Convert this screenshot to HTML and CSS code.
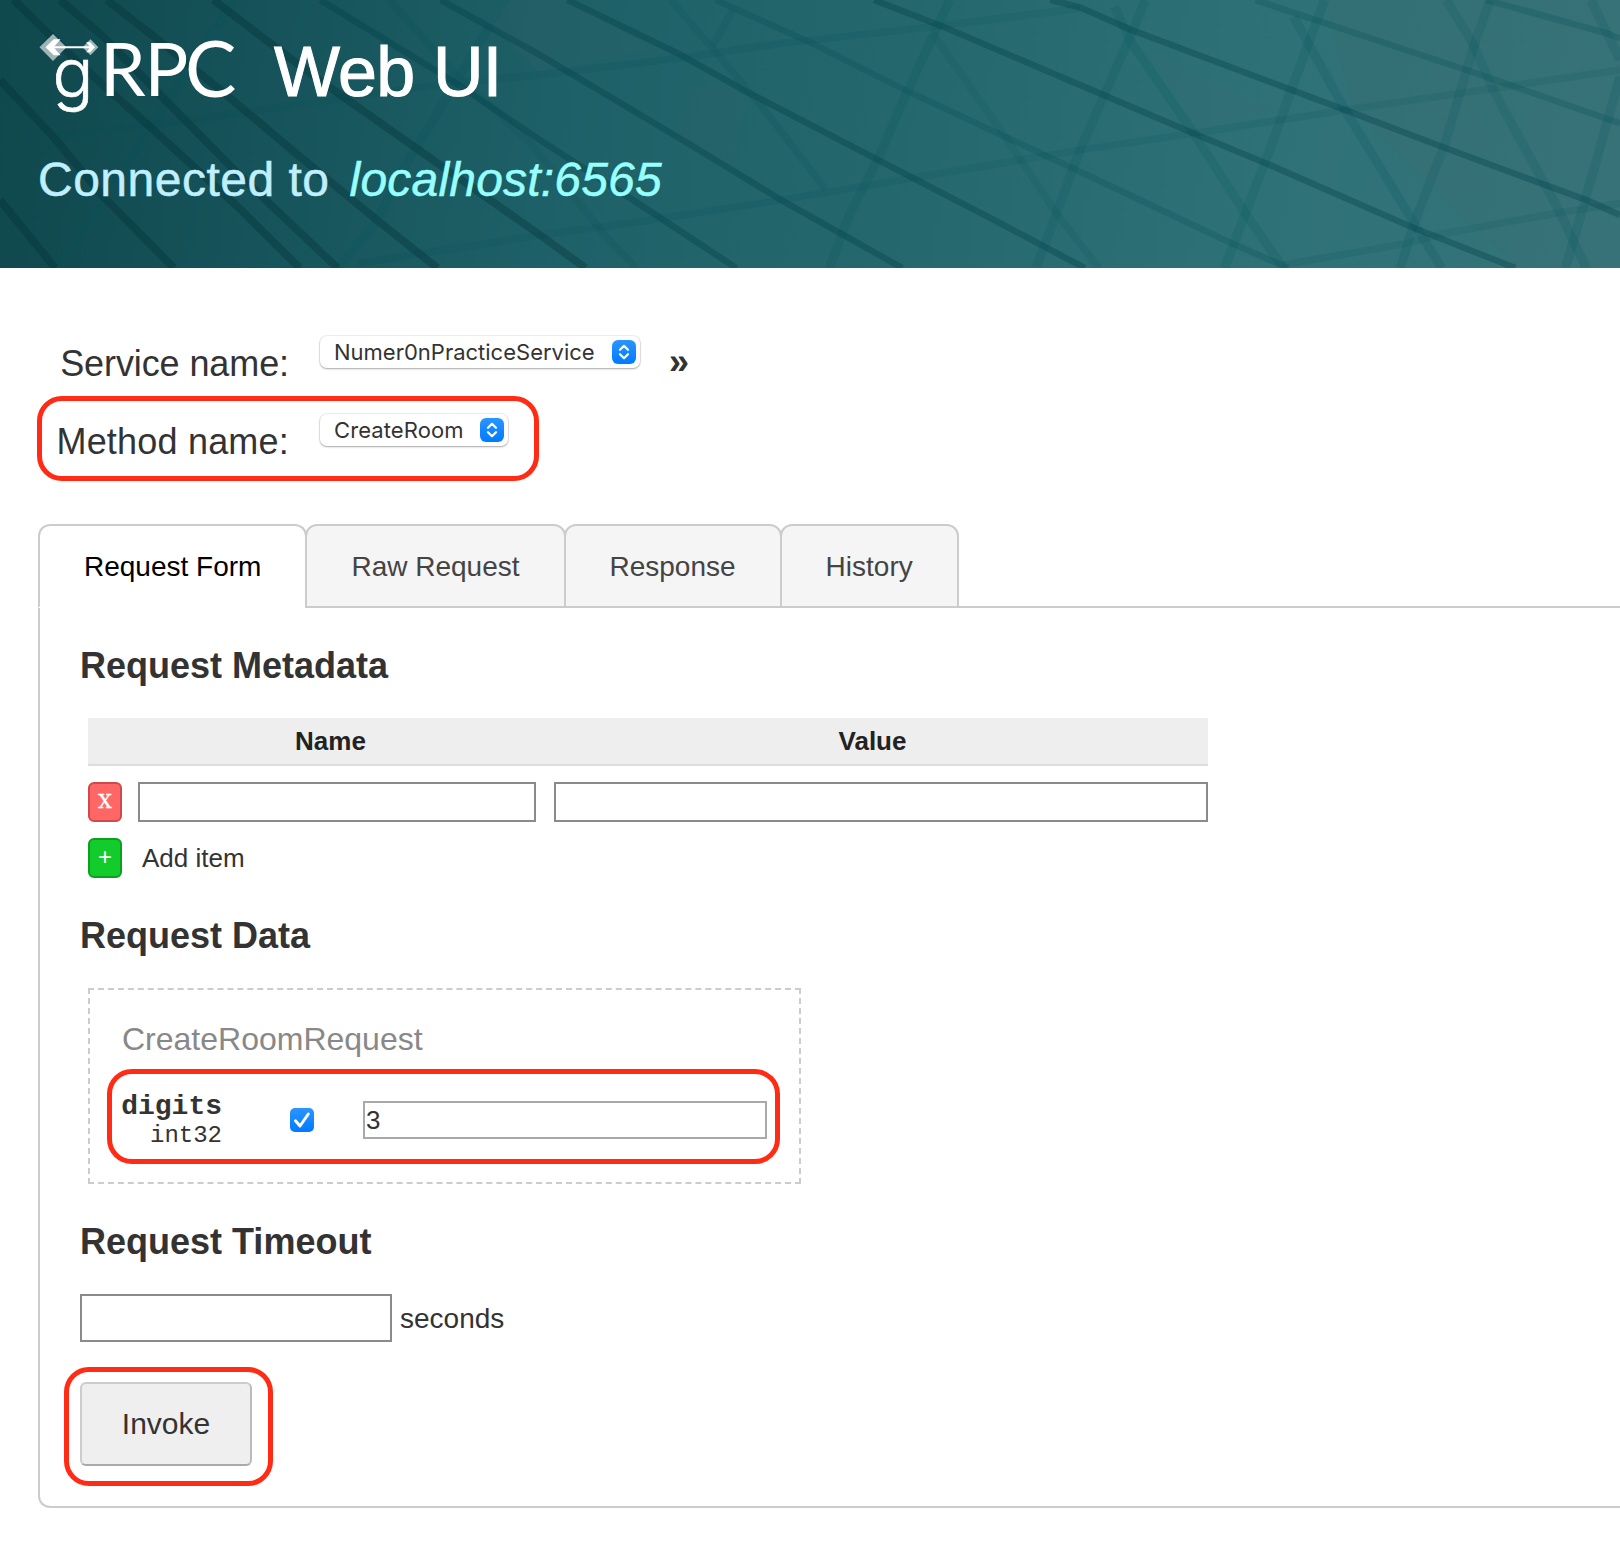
FILE: index.html
```html
<!DOCTYPE html>
<html lang="en">
<head>
<meta charset="utf-8">
<title>gRPC Web UI</title>
<link rel="stylesheet" href="styles.css">
</head>
<body>
<header class="banner">
  <svg class="banner-art" viewBox="0 0 4704 804" preserveAspectRatio="none" aria-hidden="true">
    <g class="facets">
      <path d="M1480 0H1660L1900 150L1568 215L1430 80Z"/>
      <path d="M2010 270L2100 250L2150 290L2130 500L1970 420Z"/>
      <path d="M3330 150L3700 330L3480 400Z"/>
      <path d="M3850 0H4704V800H4400L3930 330Z"/>
    </g>
    <g class="faint">
      <path d="M150 410L550 360L1300 250L1568 225L1968 175L2268 130L2668 85L3136 25"/>
      <path d="M1040 790L1568 705L1860 665L2268 600L2618 540L3136 450L3466 400L3906 330L4336 265L4704 210"/>
      <path d="M3726 795L4086 730L4196 700L4516 640L4704 610"/>
      <path d="M1130 0L1320 220L1540 430L1768 720L1848 804"/>
      <path d="M1948 0L2098 180L2228 340L2398 570"/>
      <path d="M2708 100L2918 410L3068 640L3190 804"/>
      <path d="M2128 30L2068 140"/>
    </g>
    <g class="cross">
      <path d="M680 0L560 190L430 390L300 600L165 804"/>
      <path d="M1420 80L1310 270L1180 490L1090 670L980 804"/>
      <path d="M2758 0L2708 110L2628 290L2548 480L2468 640L2408 804"/>
      <path d="M3326 0L3286 100L3136 450L3068 640L3008 804"/>
      <path d="M3846 0L3806 110L3676 480L3616 640L3556 804"/>
      <path d="M4326 0L4276 150L4196 430L4106 670L4066 804"/>
      <path d="M4704 230L4600 610L4546 804"/>
      <path d="M3236 20L3286 130L3466 400L3616 640L3726 804"/>
      <path d="M3756 50L3906 330L4106 670L4186 804"/>
      <path d="M4200 0L4276 130L4336 270L4526 630L4606 804"/>
      <path d="M4620 0L4704 180"/>
    </g>
    <g class="ribs">
      <path class="deep" d="M0 600L160 804"/>
      <path class="deep" d="M0 240L150 405L300 590L505 804"/>
      <path class="deep" d="M40 0L240 200L435 380L690 620L870 804"/>
      <path class="deep" d="M175 0L300 110L480 300L690 520L980 804"/>
      <path class="deep" d="M310 0L460 120L640 270L865 465L1100 665L1270 804"/>
      <path class="deep" d="M620 0L900 220L1230 460L1568 705L1700 804"/>
      <path d="M930 0L1310 240L1568 420L1838 600L2138 804"/>
      <path d="M1280 0L1420 80L1568 165L1998 430L2268 600L2620 804"/>
      <path d="M1648 0L1968 160L2168 275L2568 490L2868 650L3150 804"/>
      <path class="soft" d="M2078 0L2348 125L2628 270L2918 410L3136 515L3566 725L3740 804"/>
      <path d="M2538 0L2738 80L3136 255L3466 400L3676 490L4096 680L4400 804"/>
      <path d="M3050 0L3136 22L3286 90L3906 330L4186 440L4606 600L4704 645"/>
      <path class="soft" d="M3646 0L3776 45L4286 220L4704 370"/>
      <path class="soft" d="M4316 0L4666 100L4704 115"/>
    </g>
  </svg>
  <h1 class="brand">
    <svg class="logo" width="202" height="90" viewBox="38 30 202 90" role="img">
      <path class="gem" d="M39.5 47.3L53 34L66.500 47.300L53 61Z M82.500 47.300L90.500 39.300L98.300 47.300L90.500 55.300Z"/>
      <path class="tip" d="M45.500 47.300L53.800 39.300H60.500L54.500 46.300H89.500L86.200 42.300H90.200L95 47.300L90.200 52.300H86.200L89.500 48.300H54.500L60.500 55.300H53.800Z"/>
      <text class="logo-text" y="96"><tspan class="logo-g" x="52.500" y="97">g</tspan><tspan x="100 144.500" y="96">RP</tspan><tspan class="logo-c" x="185" y="97">C</tspan></text>
    </svg>
    <span class="brand-text">Web UI</span>
  </h1>
  <p class="target"><span class="target-label">Connected to</span><em>localhost:6565</em></p>
</header>

<main>
  <div class="picker">
    <label class="picker-label">Service name:</label>
    <div class="select"><span class="service">Numer0nPracticeService</span>
      <svg class="knob" viewBox="0 0 24 24"><path d="M8 9.800L12 5.800L16 9.800M8 14.200L12 18.200L16 14.200"/></svg>
    </div>
    <span class="more">»</span>
  </div>
  <div class="picker">
    <label class="picker-label wide">Method name:</label>
    <div class="select"><span class="method">CreateRoom</span>
      <svg class="knob" viewBox="0 0 24 24"><path d="M8 9.800L12 5.800L16 9.800M8 14.200L12 18.200L16 14.200"/></svg>
    </div>
    <i class="mark mark-method"></i>
  </div>

  <nav class="tabs">
    <a class="tab active">Request Form</a>
    <a class="tab">Raw Request</a>
    <a class="tab">Response</a>
    <a class="tab">History</a>
  </nav>

  <section class="panel">
    <h2>Request Metadata</h2>
    <div class="metadata">
      <div class="meta-head"><span></span><span>Name</span><span>Value</span></div>
      <div class="meta-row">
        <button class="chip remove">X</button>
        <input class="field name-field" type="text">
        <input class="field value-field" type="text">
      </div>
      <div class="meta-row">
        <button class="chip add">+</button>
        <span class="add-label">Add item</span>
      </div>
    </div>

    <h2>Request Data</h2>
    <div class="message">
      <h3>CreateRoomRequest</h3>
      <div class="param">
        <div class="param-name"><strong>digits</strong><span>int32</span></div>
        <svg class="check" viewBox="0 0 24 24"><path d="M5.500 12.800L10 18L18.300 6"/></svg>
        <input class="field param-field" type="text" value="3">
        <i class="mark mark-param"></i>
      </div>
    </div>

    <h2>Request Timeout</h2>
    <div class="timeout"><input class="field timeout-field" type="text"><span>seconds</span></div>
    <div class="actions">
      <button class="invoke">Invoke</button>
      <i class="mark mark-invoke"></i>
    </div>
  </section>
</main>
</body>
</html>
```
FILE: styles.css
```css
* { box-sizing: border-box; }

body {
  margin: 0;
  height: 1556px;
  overflow: hidden;
  background: #fff;
  color: #333;
  font-family: "Liberation Sans", Arial, sans-serif;
}

/* Banner */
.banner {
  position: relative;
  height: 268px;
  padding: 30px 38px 0;
  overflow: hidden;
  background: linear-gradient(97deg, #0f484d 0%, #16535a 17%, #1e6067 34%, #24686d 55%, #2d7176 75%, #35747a 100%);
}
.banner-art { position: absolute; inset: 0; width: 100%; height: 100%; }
.banner-art path { fill: none; stroke-linejoin: round; }
.facets path { fill: rgba(80, 100, 110, .10); }
.faint path { stroke: rgba(0, 75, 82, .13); stroke-width: 22; }
.cross path { stroke: rgba(0, 82, 88, .17); stroke-width: 27; }
.ribs path { stroke: rgba(0, 62, 70, .34); stroke-width: 19; }
.ribs .deep { stroke: rgba(0, 46, 52, .33); stroke-width: 23; }
.ribs .soft { stroke: rgba(0, 75, 82, .24); }

.brand { position: relative; display: flex; margin: 0; height: 90px; font-weight: 400; }
.logo { flex: none; overflow: visible; }
.gem { fill: rgba(255, 255, 255, .6); }
.tip { fill: #fff; }
.logo-text { font: 400 73px Lato, sans-serif; fill: #fff; }
.logo-g { font: 300 68px Inter, sans-serif; stroke: #fff; stroke-width: .6px; }
.logo-c { font-size: 77px; }
.brand-text {
  margin-left: 34px;
  font-size: 70px;
  line-height: 84px;
  letter-spacing: -.8px;
  color: #fff;
  -webkit-text-stroke: 1px #fff;
}
.target {
  position: relative;
  display: flex;
  gap: 20px;
  margin: 33px 0 0;
  font-size: 48px;
  line-height: 54px;
  color: #c0efff;
}
.target-label { letter-spacing: .5px; -webkit-text-stroke: .5px; }
.target em { letter-spacing: .2px; color: #98ffff; -webkit-text-stroke: .5px; }

main { padding: 56px 0 0 38px; }

/* Service and method pickers */
.picker { position: relative; display: flex; align-items: flex-start; height: 78px; padding-top: 12px; }
.picker-label {
  width: 251px;
  margin: 8px 31px 0 0;
  text-align: right;
  font-size: 36px;
  line-height: 40px;
  letter-spacing: -.1px;
}
.picker-label.wide { letter-spacing: .2px; }
.select {
  display: flex;
  align-items: center;
  gap: 18px;
  height: 32px;
  padding: 0 4px 0 14px;
  border-radius: 7px;
  background: #fff;
  box-shadow: 0 0 0 1px rgba(0, 0, 0, .06), 0 1px 2px rgba(0, 0, 0, .3);
  font: 22px/32px Inter, sans-serif;
  white-space: nowrap;
}
.service { width: 260px; letter-spacing: 0; }
.method { width: 128px; letter-spacing: .1px; }
.knob { width: 24px; height: 24px; border-radius: 6px; background: linear-gradient(#2b95ff, #007aff); }
.knob path { fill: none; stroke: #fff; stroke-width: 2.2; stroke-linecap: round; stroke-linejoin: round; }
.more { margin: 6px 0 0 29px; font-size: 36px; line-height: 40px; font-weight: 700; }

/* Highlight frames */
.mark { position: absolute; border: 5.500px solid #ff2b14; border-radius: 25px; pointer-events: none; }
.mark-method { left: -1.500px; top: -6px; width: 502px; height: 85px; }
.mark-param { left: -14px; top: -21px; width: 673px; height: 95px; }
.mark-invoke { left: -16px; top: -15px; width: 209px; height: 119px; }

/* Tabs */
.tabs { position: relative; z-index: 1; display: flex; margin-top: 44px; }
.tab {
  height: 84px;
  padding: 1px 44px 0;
  border: 2px solid #ccc;
  border-radius: 12px 12px 0 0;
  background: #f5f5f5;
  color: #444;
  font-size: 28px;
  line-height: 80px;
}
.tab + .tab { margin-left: -2px; }
.tab.active { border-bottom-color: #fff; background: #fff; color: #000; }

.panel {
  height: 902px;
  margin-top: -2px;
  padding: 38px 0 40px 40px;
  border: 2px solid #ccc;
  border-right: 0;
  border-radius: 0 0 0 12px;
}
h2 { margin: 0 0 32px; font-size: 36px; line-height: 40px; }
.field { height: 40px; margin: 0; padding: 0 2px; border: 2px solid #8a8a8a; border-radius: 0; background: #fff; font: 26px "Liberation Sans", Arial, sans-serif; color: #333; }

/* Metadata table */
.metadata { display: grid; gap: 16px; width: 1120px; margin: 0 0 38px 8px; font-size: 26px; }
.meta-head {
  display: grid;
  grid-template-columns: 36px 413px 671px;
  height: 48px;
  border-bottom: 2px solid #ddd;
  background: #eee;
  color: #222;
  font-weight: 700;
  line-height: 46px;
  text-align: center;
}
.meta-row { display: flex; height: 40px; }
.chip { width: 34px; height: 40px; padding: 0 0 2px; border: 2px solid; border-radius: 6px; color: #fff; font: 19px/1 "DejaVu Serif", serif; }
.remove { border-color: #cc4a4a; background: #ff6666; -webkit-text-stroke: .4px #fff; }
.add { padding: 1px 0 0; border-color: #0c9f20; background: #11cc2b; font: 24px/1 "Liberation Mono", monospace; }
.name-field { width: 398px; margin-left: 16px; }
.value-field { width: 654px; margin-left: 18px; }
.add-label { margin-left: 20px; line-height: 40px; }

/* Message form */
.message { height: 196px; width: 713px; margin: 0 0 38px 8px; padding: 31px; border: 2px dashed #ccc; }
h3 { margin: 0 0 33px 1px; font-size: 32px; line-height: 36px; font-weight: 400; color: #888; }
.param { position: relative; display: flex; align-items: center; height: 60px; }
.param-name { display: grid; width: 101px; text-align: right; font-family: "Liberation Mono", monospace; font-size: 24px; line-height: 28px; }
.param-name strong { font-size: 28px; line-height: 31px; }
.check { width: 24px; height: 24px; margin-left: 68px; border-radius: 5px; background: linear-gradient(#2b95ff, #007aff); }
.check path { fill: none; stroke: #fff; stroke-width: 3; stroke-linecap: round; stroke-linejoin: round; }
.param-field { width: 404px; height: 38px; margin-left: 49px; padding-left: 1px; border-color: #a9a9a9; }

/* Timeout and submit */
.timeout { display: flex; gap: 8px; margin-bottom: 40px; font-size: 28px; line-height: 50px; height: 48px; }
.timeout-field { width: 312px; height: 48px; }
.actions { position: relative; }
.invoke {
  display: block;
  width: 172px;
  height: 84px;
  padding: 0;
  border: 2px solid;
  border-color: #ccc #bbb #aaa #ccc;
  border-radius: 6px;
  background: #efefef;
  color: #333;
  font: 30px "Liberation Sans", Arial, sans-serif;
}
```
